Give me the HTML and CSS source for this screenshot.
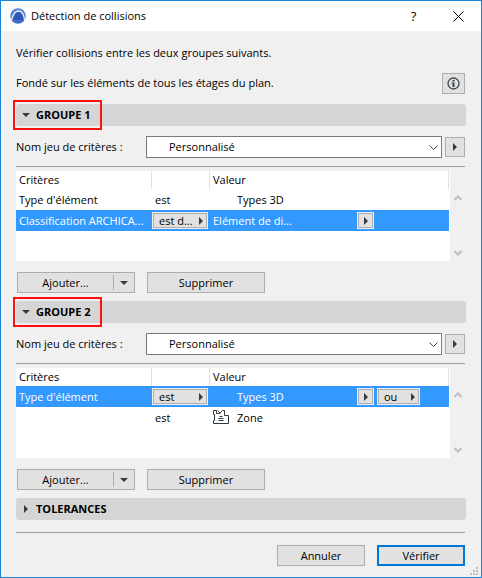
FILE: index.html
```html
<!DOCTYPE html>
<html lang="fr">
<head>
    <meta charset="UTF-8">
    <meta name="viewport" content="width=device-width, initial-scale=1.0">
    <title>Détection de collisions</title>
    <link rel="stylesheet" href="styles.css">
</head>
<body>
    <div class="dialog">
        <header class="titlebar">
            <svg class="logo" width="16" height="16" viewBox="0 0 16 16">
                <circle cx="8" cy="8" r="7.800" fill="#5583d6"/>
                <path d="M1.500 12.500 C3 6.500 5.500 3 8.500 3 C12 3.200 14 7.500 14.500 12" fill="#2f58b4" stroke="#e4edfb" stroke-width="1.300"/>
                <path d="M2 12.500 C5 16.300 11 16.300 14 12z" fill="#3f6ac4"/>
            </svg>
            <h1>Détection de collisions</h1>
            <button class="title-button" aria-label="Aide">?</button>
            <button class="title-button" aria-label="Fermer">
                <svg width="11" height="11" viewBox="0 0 11 11"><path d="M0.500 0.500 L10.500 10.500 M10.500 0.500 L0.500 10.500" stroke="#000" fill="none"/></svg>
            </button>
        </header>

        <main>
            <p class="intro">Vérifier collisions entre les deux groupes suivants.</p>
            <div class="intro-row">
                <p class="intro">Fondé sur les éléments de tous les étages du plan.</p>
                <button class="button info" aria-label="Informations">
                    <svg width="13" height="13" viewBox="0 0 13 13">
                        <circle cx="6.500" cy="6.500" r="5.500" fill="none" stroke="#3c4650" stroke-width="1.300"/>
                        <path d="M5.500 3h2v1.500h-2z M4.500 5.500h3v4.500h-2v-3.500h-1z" fill="#3c4650"/>
                    </svg>
                </button>
            </div>

            <section>
                <h2 class="group-title marked">
                    <button><svg class="arrow" width="8" height="8" viewBox="0 0 8 8"><path d="M0 2h8L4 6z"/></svg>GROUPE 1</button>
                </h2>
                <div class="criteria-set">
                    <label for="set1">Nom jeu de critères :</label>
                    <div class="select">
                        <select id="set1"><option>Personnalisé</option></select>
                        <svg width="9" height="6" viewBox="0 0 9 6"><path d="M0.500 0.500 L4.500 4.500 L8.500 0.500" stroke="#444" fill="none"/></svg>
                    </div>
                    <button class="button square" aria-label="Jeux de critères"><svg width="4" height="8" viewBox="0 0 4 8"><path d="M0 0v8L4 4z"/></svg></button>
                </div>
                <div class="list">
                    <div class="list-body">
                        <table>
                            <thead>
                                <tr><th class="col-criterion">Critères</th><th class="col-operator"></th><th>Valeur</th></tr>
                            </thead>
                            <tbody>
                                <tr>
                                    <td>Type d'élément</td>
                                    <td>est</td>
                                    <td><div class="value"><span class="value-text indent">Types 3D</span></div></td>
                                </tr>
                                <tr class="selected">
                                    <td>Classification ARCHICA...</td>
                                    <td class="operator"><button class="cell-button">est d...<svg width="4" height="8" viewBox="0 0 4 8"><path d="M0 0v8L4 4z"/></svg></button></td>
                                    <td><div class="value"><span class="value-text">Elément de di...</span><button class="cell-button small" aria-label="Choisir la valeur"><svg width="4" height="8" viewBox="0 0 4 8"><path d="M0 0v8L4 4z"/></svg></button></div></td>
                                </tr>
                            </tbody>
                        </table>
                    </div>
                    <div class="scrollbar">
                        <svg width="8" height="6" viewBox="0 0 8 6"><path d="M0.500 5 L4 1.500 L7.500 5"/></svg>
                        <svg width="8" height="6" viewBox="0 0 8 6"><path d="M0.500 1 L4 4.500 L7.500 1"/></svg>
                    </div>
                </div>
                <div class="list-actions">
                    <div class="button split">
                        <button>Ajouter...</button>
                        <button class="drop" aria-label="Plus d'options"><svg width="8" height="4" viewBox="0 0 8 4"><path d="M0 0h8L4 4z"/></svg></button>
                    </div>
                    <button class="button wide">Supprimer</button>
                </div>
            </section>

            <section>
                <h2 class="group-title marked">
                    <button><svg class="arrow" width="8" height="8" viewBox="0 0 8 8"><path d="M0 2h8L4 6z"/></svg>GROUPE 2</button>
                </h2>
                <div class="criteria-set">
                    <label for="set2">Nom jeu de critères :</label>
                    <div class="select">
                        <select id="set2"><option>Personnalisé</option></select>
                        <svg width="9" height="6" viewBox="0 0 9 6"><path d="M0.500 0.500 L4.500 4.500 L8.500 0.500" stroke="#444" fill="none"/></svg>
                    </div>
                    <button class="button square" aria-label="Jeux de critères"><svg width="4" height="8" viewBox="0 0 4 8"><path d="M0 0v8L4 4z"/></svg></button>
                </div>
                <div class="list">
                    <div class="list-body">
                        <table>
                            <thead>
                                <tr><th class="col-criterion">Critères</th><th class="col-operator"></th><th>Valeur</th></tr>
                            </thead>
                            <tbody>
                                <tr class="selected">
                                    <td>Type d'élément</td>
                                    <td class="operator"><button class="cell-button">est<svg width="4" height="8" viewBox="0 0 4 8"><path d="M0 0v8L4 4z"/></svg></button></td>
                                    <td><div class="value"><span class="value-text indent">Types 3D</span><button class="cell-button small" aria-label="Choisir la valeur"><svg width="4" height="8" viewBox="0 0 4 8"><path d="M0 0v8L4 4z"/></svg></button><button class="cell-button logic">ou<svg width="4" height="8" viewBox="0 0 4 8"><path d="M0 0v8L4 4z"/></svg></button></div></td>
                                </tr>
                                <tr>
                                    <td></td>
                                    <td>est</td>
                                    <td><div class="value"><span class="value-text"><svg class="zone" width="17" height="15" viewBox="0 0 17 15"><path d="M0.500 0.500h3v3h3l3-3h2v5h4v8h-15v-3h1v-6h-1z M4.500 0.500l3 3 M6.500 6.500h3 M5.500 8.500h5 M5.500 10.500h5"/></svg>Zone</span></div></td>
                                </tr>
                            </tbody>
                        </table>
                    </div>
                    <div class="scrollbar">
                        <svg width="8" height="6" viewBox="0 0 8 6"><path d="M0.500 5 L4 1.500 L7.500 5"/></svg>
                        <svg width="8" height="6" viewBox="0 0 8 6"><path d="M0.500 1 L4 4.500 L7.500 1"/></svg>
                    </div>
                </div>
                <div class="list-actions">
                    <div class="button split">
                        <button>Ajouter...</button>
                        <button class="drop" aria-label="Plus d'options"><svg width="8" height="4" viewBox="0 0 8 4"><path d="M0 0h8L4 4z"/></svg></button>
                    </div>
                    <button class="button wide">Supprimer</button>
                </div>
            </section>

            <section>
                <h2 class="group-title">
                    <button><svg class="arrow" width="8" height="8" viewBox="0 0 8 8"><path d="M2 0v8L6 4z"/></svg>TOLERANCES</button>
                </h2>
            </section>
        </main>

        <footer>
            <button class="button action">Annuler</button>
            <button class="button action default">Vérifier</button>
        </footer>
        <svg class="grip" width="8" height="8" viewBox="0 0 8 8"><path d="M6 0h2v2h-2z M3 3h2v2h-2z M6 3h2v2h-2z M0 6h2v2h-2z M3 6h2v2h-2z M6 6h2v2h-2z"/></svg>
    </div>
</body>
</html>
```
FILE: styles.css
```css
*, *::after {
    box-sizing: border-box;
}
body {
    margin: 0;
    font-family: "Open Sans", sans-serif;
    font-size: 11px;
    line-height: 16px;
    color: #000;
}
h1, h2, p {
    margin: 0;
}
button, select {
    margin: 0;
    padding: 0;
    border: 0;
    background: none;
    font: inherit;
    color: inherit;
}
svg {
    display: block;
    flex: none;
    fill: #3a3a3a;
}
.dialog {
    position: relative;
    min-height: 100vh;
    background-color: #f0f0f0;
    border: 1px solid #1883d7;
}
.titlebar {
    display: flex;
    align-items: center;
    height: 30px;
    padding-left: 9px;
    background-color: #fff;
}
.titlebar h1 {
    flex: 1;
    margin-left: 5px;
    font-size: 11px;
    font-weight: normal;
}
.title-button {
    display: flex;
    justify-content: center;
    align-items: center;
    width: 45px;
    height: 28px;
    font-size: 13px;
}
main {
    padding: 14px 15px 0;
}
.intro-row {
    display: flex;
    justify-content: space-between;
    align-items: center;
    height: 22px;
    margin: 11px 1px 10px 0;
}

/* Buttons */
.button {
    display: flex;
    justify-content: center;
    align-items: center;
    height: 21px;
    background-color: #e1e1e1;
    border: 1px solid #adadad;
}
.info {
    width: 23px;
}
.square {
    width: 20px;
    height: 20px;
}
.wide, .split {
    width: 118px;
}
.split button {
    flex: 1;
}
.split .drop {
    display: flex;
    flex: none;
    justify-content: center;
    align-items: center;
    width: 21px;
    height: 15px;
    border-left: 1px solid #adadad;
}
.action {
    width: 88px;
}
.default {
    border: 2px solid #0078d7;
}

/* Groups */
.group-title {
    position: relative;
    height: 22px;
    background-color: #d5d5d5;
    border-radius: 3px;
    font-size: 11px;
    font-weight: bold;
}
.group-title button {
    display: flex;
    align-items: center;
    width: 100%;
    height: 22px;
    padding-left: 6px;
}
.marked::after {
    content: "";
    position: absolute;
    top: -4px;
    left: -3px;
    width: 89px;
    height: 30px;
    border: 2px solid #f11;
}
.arrow {
    margin-right: 6px;
}
.criteria-set {
    display: flex;
    align-items: center;
    margin: 10px 1px 8px 0;
}
.criteria-set label {
    width: 130px;
}
.select {
    position: relative;
    flex: 1;
    margin-right: 3px;
}
.select select {
    display: block;
    width: 100%;
    height: 22px;
    padding-left: 22px;
    appearance: none;
    background-color: #fff;
    border: 1px solid #7a7a7a;
}
.select svg {
    position: absolute;
    top: 9px;
    right: 4px;
    pointer-events: none;
}

/* Criteria lists */
.list {
    display: flex;
    margin-right: 1px;
    padding-top: 4px;
    border-top: 1px solid #a0a0a0;
}
.list-body {
    flex: 1;
    padding: 0 1px 30px 0;
    background-color: #fff;
}
table {
    width: 100%;
    table-layout: fixed;
    border-collapse: separate;
    border-spacing: 0;
}
th, td {
    padding: 0 0 0 3px;
    text-align: left;
    font-weight: normal;
    white-space: nowrap;
}
th {
    height: 18px;
    border-right: 1px solid #e0e0e0;
}
td {
    height: 21px;
}
.col-criterion {
    width: 136px;
}
.col-operator {
    width: 58px;
}
.selected {
    background-color: #3399ff;
    color: #fff;
}
td.operator {
    padding: 0;
}
.value {
    display: flex;
    align-items: center;
}
.value-text {
    display: flex;
    align-items: center;
    width: 144px;
}
.indent {
    padding-left: 24px;
}
.zone {
    margin-right: 7px;
    fill: none;
    stroke: #2f3a44;
}
.cell-button {
    display: flex;
    justify-content: space-between;
    align-items: center;
    width: 56px;
    height: 17px;
    padding: 0 4px 0 6px;
    background-color: #e1e1e1;
    border: 1px solid #f0f0f0;
    box-shadow: inset 0 0 0 1px #adadad;
    color: #000;
}
.small {
    justify-content: center;
    width: 17px;
    padding: 0;
}
.logic {
    width: 43px;
    margin-left: 3px;
}
.scrollbar {
    display: flex;
    flex-direction: column;
    justify-content: space-between;
    align-items: center;
    width: 15px;
    padding: 24px 0 5px;
}
.scrollbar path {
    fill: none;
    stroke: #bfbfbf;
    stroke-width: 2;
}
.list-actions {
    display: flex;
    gap: 12px;
    margin: 11px 0 8px 1px;
}

footer {
    display: flex;
    justify-content: flex-end;
    gap: 12px;
    margin: 12px 16px 0 15px;
    padding-top: 12px;
    border-top: 1px solid #a0a0a0;
}
.grip {
    position: absolute;
    right: 3px;
    bottom: 2px;
    fill: #bfbfbf;
}
```
